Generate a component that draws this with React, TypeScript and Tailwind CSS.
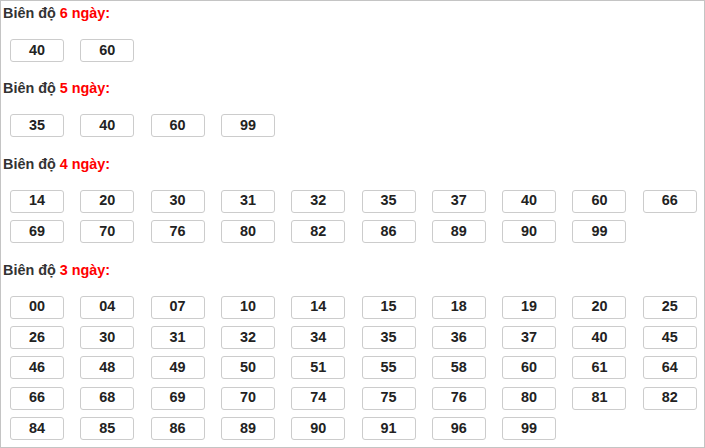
const sections: { days: number; nums: string[] }[] = [
  { days: 6, nums: ['40', '60'] },
  { days: 5, nums: ['35', '40', '60', '99'] },
  {
    days: 4,
    nums: ['14', '20', '30', '31', '32', '35', '37', '40', '60', '66', '69', '70', '76', '80', '82', '86', '89', '90', '99'],
  },
  {
    days: 3,
    nums: [
      '00', '04', '07', '10', '14', '15', '18', '19', '20', '25',
      '26', '30', '31', '32', '34', '35', '36', '37', '40', '45',
      '46', '48', '49', '50', '51', '55', '58', '60', '61', '64',
      '66', '68', '69', '70', '74', '75', '76', '80', '81', '82',
      '84', '85', '86', '89', '90', '91', '96', '99',
    ],
  },
];

export default function App() {
  return (
    <div className="h-[448px] w-[705px] overflow-hidden border border-[#c4c4c4] bg-white font-['Liberation_Sans',Arial,sans-serif] text-[14.4px] font-bold text-[#333]">
      {sections.map((s) => (
        <section key={s.days} className="pb-[14.4px]">
          <h3 className="h-[24px] pl-[2px] leading-[24px]">
            Biên độ <span className="text-[#ff0000]">{s.days} ngày:</span>
          </h3>
          <div className="mt-[14px] grid grid-cols-10 gap-y-[7.4px]">
            {s.nums.map((n, i) => (
              <div
                key={i}
                className="ml-[9px] flex h-[23px] w-[54px] items-center justify-center rounded-[3px] border border-[#cccccc] text-[#222]"
              >
                {n}
              </div>
            ))}
          </div>
        </section>
      ))}
    </div>
  );
}
